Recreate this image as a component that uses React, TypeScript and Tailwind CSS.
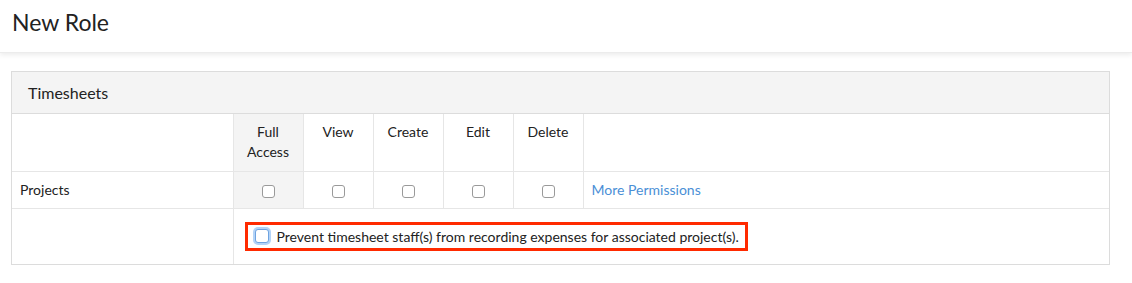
import React from "react";

const cols = ["Full Access", "View", "Create", "Edit", "Delete"];

const Box: React.FC = () => (
  <span className="inline-block w-[13px] h-[13px] rounded-[3px] border border-[#9a9a9a] bg-white align-middle" />
);

export default function App() {
  return (
    <div className="bg-white min-h-[283px] text-[#222]" style={{ fontFamily: "Lato, 'Open Sans', sans-serif" }}>
      {/* Page header */}
      <div className="h-[53px] pl-[12px] pt-[7px] shadow-[0_2px_5px_rgba(0,0,0,0.08)] border-b border-[#ececec]">
        <h1 className="text-[23px] leading-[30px] font-normal text-[#222]">New Role</h1>
      </div>

      <div className="pl-[11px] pr-[22px] pt-[18px]">
        <div className="border border-[#dcdcdc]">
          <div className="h-[42px] bg-[#f4f4f4] border-b border-[#dcdcdc] flex items-center pl-[16px] text-[16px]">
            Timesheets
          </div>

          <table className="w-full border-collapse text-[14px]">
            <tbody>
              <tr className="h-[57px]">
                <td className="w-[221px] border-r border-b border-[#e6e6e6]" />
                {cols.map((c, i) => (
                  <td
                    key={c}
                    className={`w-[70px] border-r border-b border-[#e6e6e6] align-top text-center pt-[8px] leading-[20px] ${
                      i === 0 ? "bg-[#f4f4f4] px-[12px]" : ""
                    }`}
                  >
                    {c}
                  </td>
                ))}
                <td className="border-b border-[#e6e6e6]" />
              </tr>

              <tr className="h-[37px]">
                <td className="border-r border-b border-[#e6e6e6] pl-[8px]">Projects</td>
                {cols.map((c, i) => (
                  <td
                    key={c}
                    className={`border-r border-b border-[#e6e6e6] text-center ${i === 0 ? "bg-[#f4f4f4]" : ""}`}
                  >
                    <Box />
                  </td>
                ))}
                <td className="border-b border-[#e6e6e6] pl-[8px] text-[#4a8fd6]">More Permissions</td>
              </tr>

              <tr className="h-[56px]">
                <td className="border-r border-[#e6e6e6]" />
                <td colSpan={6} className="pl-[11px]">
                  <div className="inline-flex items-center h-[29px] border-[3px] border-[#ff2a00] pl-[7px] pr-[6px] gap-[8px] text-[14px]">
                    <span className="inline-block w-[14px] h-[14px] rounded-[3px] border border-[#6ea3e0] bg-white shadow-[0_0_0_2px_#b3d3f7]" />
                    <span>Prevent timesheet staff(s) from recording expenses for associated project(s).</span>
                  </div>
                </td>
              </tr>
            </tbody>
          </table>
        </div>
      </div>
    </div>
  );
}
